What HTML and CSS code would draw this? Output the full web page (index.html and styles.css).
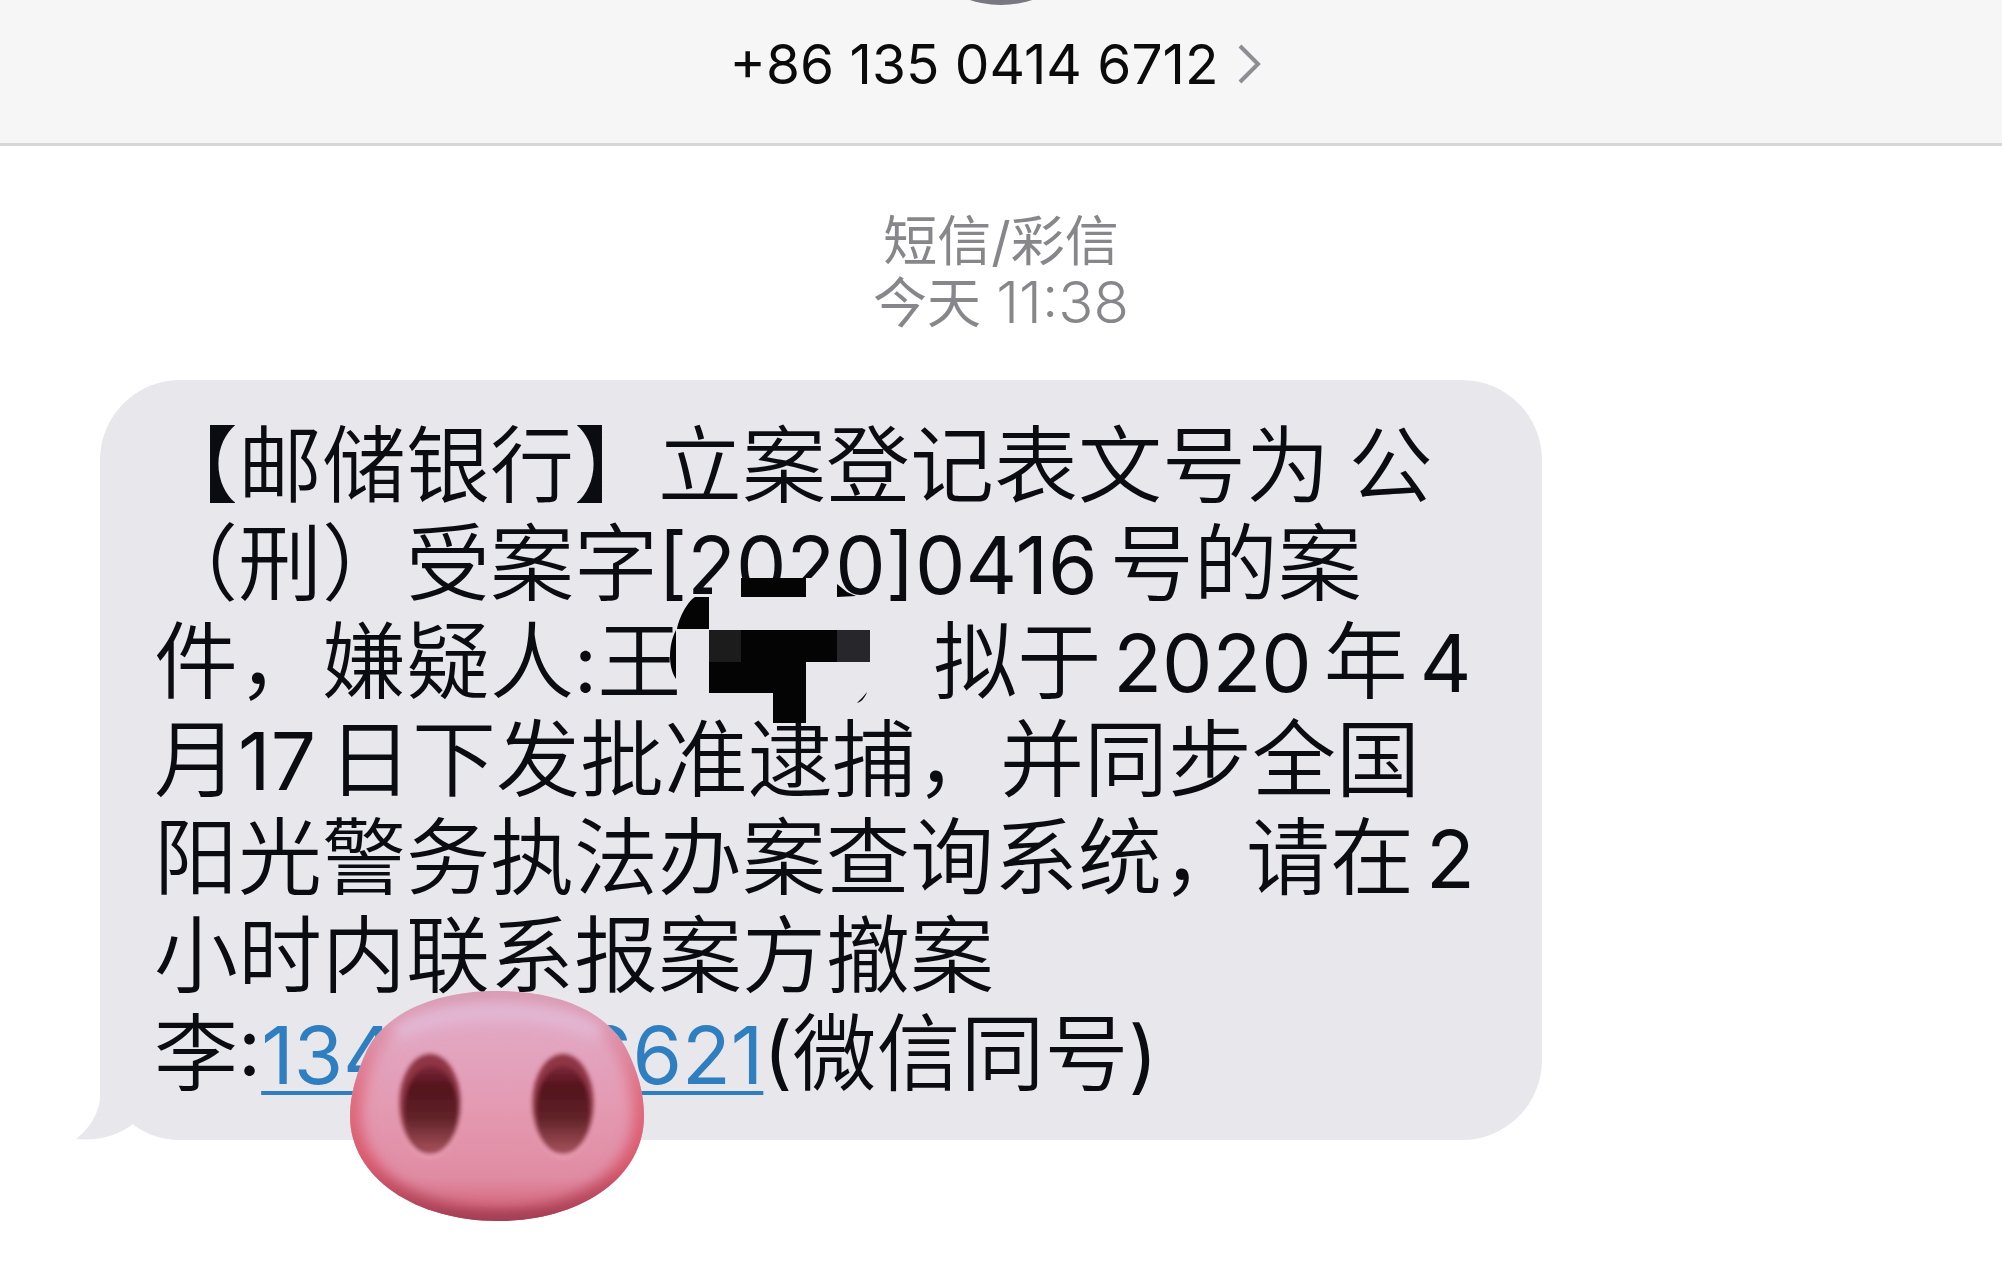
FILE: index.html
```html
<!DOCTYPE html>
<html lang="zh-CN">
<head>
<meta charset="utf-8">
<meta name="viewport" content="width=device-width, initial-scale=1">
<title>短信</title>
<link rel="stylesheet" href="styles.css">
</head>
<body>
<header class="topbar">
  <span class="avatar"></span>
  <button class="contact" type="button">
    <span>+86 135 0414 6712</span>
    <svg class="chevron" viewBox="0 0 24 40" aria-hidden="true"><path d="M2 2 20 20 2 38"/></svg>
  </button>
</header>
<main class="thread">
  <div class="stamp">
    <p>短信/彩信</p>
    <p>今天 <span class="time">11:38</span></p>
  </div>
  <article class="bubble">
    <p class="text">【邮储银行】立案登记表文号为 公<br>（刑）受案字<span class="num">[2020]0416</span><span class="gap"></span>号的案<br>件，嫌疑人<span class="num">:</span>王<span class="redacted"><svg class="mosaic" viewBox="664 570 216 160" aria-hidden="true">
      <path class="cover" d="M713 578h29v19h-29zM807 578h31v19h-31zM678 630h32v64h-32z"/>
      <path class="ink" d="M742 578h65v19h-65zM838 584 848 592 857 596 838 597zM710 630h161v32h-64v61h-33v-30h-64z"/>
      <path class="ink" d="M710 597v32h-32C680 618 688 602 696 597zM677 630C669 645 669 668 677 679z"/>
      <path class="cell-a" d="M710 630h32v32h-32z"/>
      <path class="cell-b" d="M838 630h33v32h-33z"/>
      <path class="ink" d="M868 692C866 698 862 702 858 703 861 700 865 696 868 692z"/>
    </svg></span>拟于<span class="gap"></span><span class="num">2020</span><span class="gap"></span>年<span class="gap"></span><span class="num">4</span><br>月<span class="num">17</span><span class="gap"></span>日下发批准逮捕，并同步全国<br>阳光警务执法办案查询系统，请在<span class="gap"></span><span class="num">2</span><br>小时内联系报案方撤案<br>李<span class="num">:<a href="#call">134<span class="hidden-digits"></span>6621</a>(</span>微信同号<span class="num">)</span></p>
    <svg class="tail" viewBox="76 1060 60 80" aria-hidden="true"><path d="M100 1060V1098C99 1114 88 1130 76 1139 97 1141 119 1136 134 1123L136 1060z"/></svg>
    <svg class="snout" viewBox="350 990 296 234" aria-hidden="true">
      <defs>
        <linearGradient id="skin" x1="0" y1="0" x2="0" y2="1">
          <stop offset="0" stop-color="#d9a0b8"/><stop offset=".12" stop-color="#e2a9c5"/>
          <stop offset=".5" stop-color="#e49ab2"/><stop offset=".8" stop-color="#e08ca3"/>
          <stop offset=".92" stop-color="#d66c82"/><stop offset="1" stop-color="#a94258"/>
        </linearGradient>
        <linearGradient id="edge" x1="0" y1="0" x2="0" y2="1">
          <stop offset="0" stop-color="#d58fa6" stop-opacity=".3"/><stop offset=".45" stop-color="#df6a7c"/>
          <stop offset=".75" stop-color="#d9566a"/><stop offset="1" stop-color="#a03c52"/>
        </linearGradient>
        <linearGradient id="hole" x1="0" y1="0" x2="0" y2="1">
          <stop offset="0" stop-color="#7c2737"/><stop offset=".25" stop-color="#53141d"/>
          <stop offset=".6" stop-color="#602227"/><stop offset="1" stop-color="#a5515c"/>
        </linearGradient>
        <filter id="soft" x="-20%" y="-200%" width="140%" height="500%"><feGaussianBlur stdDeviation="7"/></filter>
        <filter id="fine" x="-20%" y="-20%" width="140%" height="140%"><feGaussianBlur stdDeviation="2"/></filter>
        <clipPath id="face"><path d="M497 991C566 991 610 1016 627 1050 638 1072 644 1094 644 1116 644 1178 580 1221 498 1221 416 1221 350 1178 350 1116 350 1094 357 1072 367 1050 384 1016 430 991 497 991z"/></clipPath>
      </defs>
      <g clip-path="url(#face)">
        <path fill="url(#skin)" d="M350 990h296v234H350z"/>
        <path fill="none" stroke="url(#edge)" stroke-width="22" filter="url(#soft)" d="M497 991C566 991 610 1016 627 1050 638 1072 644 1094 644 1116 644 1178 580 1221 498 1221 416 1221 350 1178 350 1116 350 1094 357 1072 367 1050 384 1016 430 991 497 991z"/>
        <path fill="none" stroke="#e3bad6" stroke-width="14" filter="url(#soft)" d="M396 1034C440 1004 554 1004 600 1034"/>
      </g>
      <g filter="url(#fine)">
        <ellipse cx="430" cy="1107" rx="32" ry="51" fill="#efa0b4"/>
        <ellipse cx="563" cy="1107" rx="32" ry="51" fill="#efa0b4"/>
        <ellipse cx="430" cy="1104" rx="31" ry="50" fill="#8f3445"/>
        <ellipse cx="563" cy="1104" rx="31" ry="50" fill="#8f3445"/>
        <ellipse cx="431" cy="1109" rx="27" ry="43" fill="url(#hole)"/>
        <ellipse cx="563" cy="1109" rx="27" ry="43" fill="url(#hole)"/>
      </g>
    </svg>
  </article>
</main>
</body>
</html>
```
FILE: styles.css
```css
* { box-sizing: border-box; }

body {
  min-height: 100vh;
  margin: 0;
  background: #fff;
  color: #0b0b12;
  font-family: Inter, "Noto Sans CJK SC", sans-serif;
}

p { margin: 0; }

.topbar {
  position: relative;
  display: flex;
  justify-content: center;
  padding: 32px 10px 47px 0;
  overflow: hidden;
  background: #f6f6f6;
  border-bottom: 3px solid #d6d6d7;
}

.avatar {
  position: absolute;
  left: 50%;
  top: -195px;
  width: 200px;
  height: 200px;
  margin-left: -100px;
  border-radius: 50%;
  background: #79777f;
}

.contact {
  display: flex;
  align-items: center;
  gap: 20px;
  padding: 0;
  border: 0;
  background: none;
  color: #0b0b0c;
  font: 400 55px/64px Inter, sans-serif;
}

.chevron {
  width: 24px;
  height: 40px;
  fill: none;
  stroke: #8e8e92;
  stroke-width: 4;
}

.thread { padding: 65px 5% 140px; }

.stamp {
  color: #87878b;
  font-size: 54px;
  line-height: 62px;
  text-align: center;
}

.time {
  font-size: 58px;
  font-weight: 300;
  line-height: 1px;
}

.bubble {
  position: relative;
  width: 80%;
  margin-top: 45px;
  padding: 31px 54px 43px;
  border-radius: 80px;
  background: #e8e7ec;
}

.text {
  font-family: "Noto Sans CJK SC", sans-serif;
  font-size: 84px;
  font-weight: 350;
  line-height: 98px;
  white-space: nowrap;
}

.num {
  font-family: Inter, sans-serif;
  font-size: 80px;
  font-weight: 400;
  line-height: 1px;
}

.gap {
  display: inline-block;
  width: 12px;
}

.text a {
  color: #2f7fc0;
  text-decoration-thickness: 4px;
  text-underline-offset: 7px;
}

.hidden-digits {
  display: inline-block;
  width: 188px;
}

.redacted {
  position: relative;
  display: inline-block;
  width: 252px;
  height: 84px;
  vertical-align: top;
}

.mosaic {
  position: absolute;
  top: -37px;
  left: -18px;
  width: 216px;
  height: 160px;
}

.cover { fill: #e8e7ec; }
.ink { fill: #040405; }
.cell-a { fill: #1c1c1d; }
.cell-b { fill: #27262b; }

.tail {
  position: absolute;
  bottom: 0;
  left: -24px;
  width: 60px;
  height: 80px;
  fill: #e8e7ec;
}

.snout {
  position: absolute;
  bottom: -84px;
  left: 250px;
  width: 296px;
  height: 234px;
}
```
